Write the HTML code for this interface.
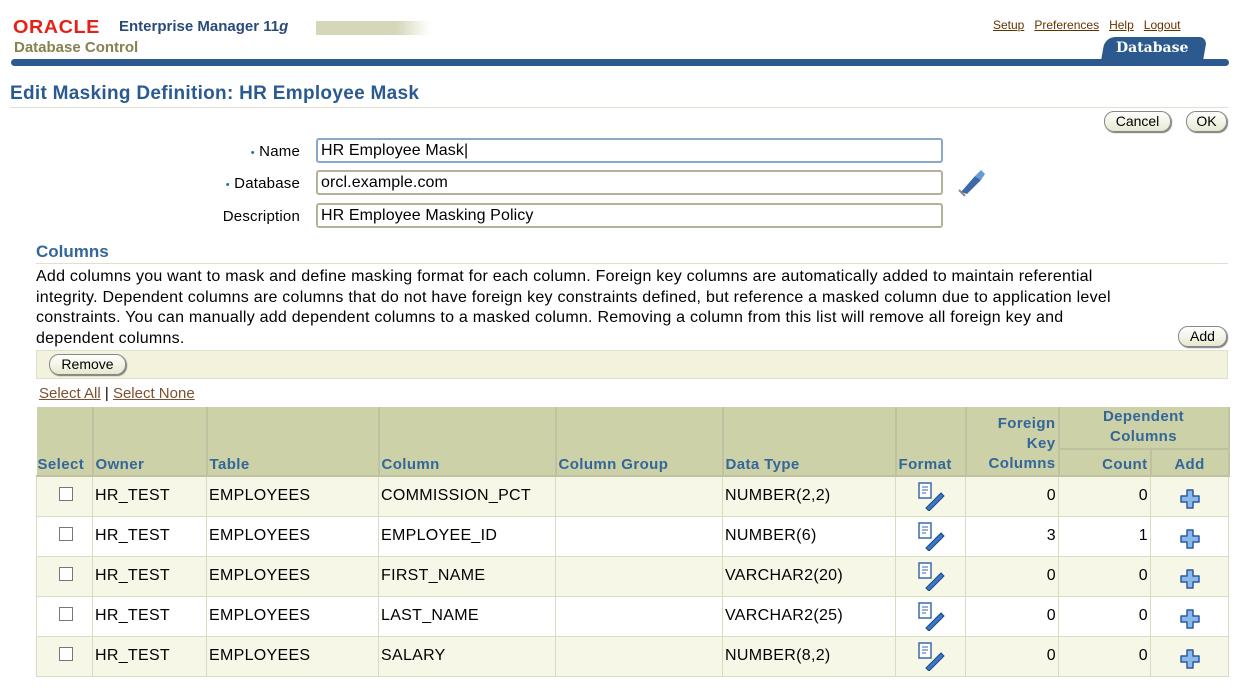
<!DOCTYPE html>
<html><head><style>
*{margin:0;padding:0;box-sizing:border-box}
body{width:1236px;height:692px;background:#fff;font-family:"Liberation Sans",sans-serif;position:relative;overflow:hidden;color:#000}
.a{position:absolute}
.lnk{color:#663300;text-decoration:underline;font-size:12px}
.btn{position:absolute;border:1px solid #888;border-radius:10px;background:linear-gradient(#fff,#e8e8d0);box-shadow:1px 1px 1px #777;font-size:14px;text-align:center;line-height:19px;height:21px}
.lbl{position:absolute;font-size:15px;text-align:right;width:200px;left:100px;letter-spacing:0.2px}
.inp{position:absolute;left:316px;width:627px;height:25px;border:2px solid #b5b29a;border-radius:3px;font-size:16px;padding:2px 3px;line-height:18px;letter-spacing:0.1px}
table{position:absolute;left:36px;top:407px;border-collapse:collapse;font-size:16px;letter-spacing:0.3px;table-layout:fixed}
td,th{border:1px solid #d8dcc0;overflow:hidden;white-space:nowrap}
th{background:#cdd1a8;color:#336699;font-weight:bold;text-align:left;vertical-align:bottom;padding:0 2px 1px 2px;border:2px solid #bfc2a0;border-width:0 2px 2px 0;line-height:18px;font-size:15px;letter-spacing:0.4px}
th.r{text-align:right}
td{height:40px;padding:0 2px;vertical-align:middle}
tr.o td{background:#f7f7e7}
tr.e td{background:#fff}
.cb{display:inline-block;width:14px;height:14px;border:1px solid #777;background:#fff;margin-left:20px}
</style></head><body>
<div class="a" style="left:13px;top:17px;font-size:18px;color:#e52218;font-weight:bold;letter-spacing:0.5px;transform:scaleX(1.1);transform-origin:left">ORACLE</div>
<div class="a" style="left:119px;top:18px;font-size:15px;color:#2a4a7c;font-weight:bold">Enterprise Manager 11<i>g</i></div>
<div class="a" style="left:316px;top:21px;width:114px;height:14px;background:linear-gradient(90deg,#d6d6b8 70%,#fff)"></div>
<div class="a" style="left:14px;top:39px;font-size:15px;color:#858250;font-weight:bold">Database Control</div>
<div class="a" style="left:993px;top:18px;font-size:12px"><span class="lnk">Setup</span>&nbsp;&nbsp;&nbsp;<span class="lnk">Preferences</span>&nbsp;&nbsp;&nbsp;<span class="lnk">Help</span>&nbsp;&nbsp;&nbsp;<span class="lnk">Logout</span></div>
<div class="a" style="left:1103px;top:37px;width:102px;height:25px;background:#2c5a8e;border-radius:10px 8px 0 0;transform:skewX(-10deg)"></div>
<div class="a" style="left:1116px;top:40px;color:#fff;font-weight:bold;font-size:14px;font-family:'DejaVu Serif',serif">Database</div>
<div class="a" style="left:11px;top:59px;width:1218px;height:7px;background:#2c5a8e;border-radius:4px"></div>
<div class="a" style="left:10px;top:83px;font-size:19px;font-weight:bold;color:#2a5a90;letter-spacing:0.3px">Edit Masking Definition: HR Employee Mask</div>
<div class="a" style="left:10px;top:107px;width:1218px;height:1px;background:#e0e0cc"></div>
<div class="btn" style="left:1104px;top:111px;width:67px">Cancel</div>
<div class="btn" style="left:1186px;top:111px;width:41px">OK</div>
<div class="lbl" style="top:143px"><span style="color:#336699;font-size:11px">•</span> Name</div>
<div class="lbl" style="top:175px"><span style="color:#336699;font-size:11px">•</span> Database</div>
<div class="lbl" style="top:208px">Description</div>
<div class="inp" style="top:138px;border-color:#8aa8c8">HR Employee Mask|</div>
<div class="inp" style="top:170px">orcl.example.com</div>
<div class="inp" style="top:203px">HR Employee Masking Policy</div>
<svg class="a" style="left:955px;top:166px" width="32" height="32" viewBox="0 0 32 32"><path d="M6 26 L20 10 L26 14 L12 28 Z" fill="#3a6aa8"/><path d="M20 10 L26 4 L30 8 L26 14Z" fill="#6a9ad0"/><path d="M4 24 L10 30" stroke="#888" stroke-width="2"/></svg>
<div class="a" style="left:36px;top:242px;font-size:17px;font-weight:bold;color:#336699">Columns</div>
<div class="a" style="left:36px;top:263px;width:1192px;height:1px;background:#e0e0cc"></div>
<div class="a" style="left:36px;top:267px;font-size:16px;letter-spacing:0.25px;line-height:20.5px;white-space:nowrap">Add columns you want to mask and define masking format for each column. Foreign key columns are automatically added to maintain referential<br>integrity. Dependent columns are columns that do not have foreign key constraints defined, but reference a masked column due to application level<br>constraints. You can manually add dependent columns to a masked column. Removing a column from this list will remove all foreign key and<br>dependent columns.</div>
<div class="btn" style="left:1178px;top:326px;width:49px">Add</div>
<div class="a" style="left:36px;top:350px;width:1192px;height:29px;background:#f2f2dd;border:1px solid #e0e0c8"></div>
<div class="btn" style="left:49px;top:354px;width:77px">Remove</div>
<div class="a" style="left:39px;top:385px;font-size:15px"><span class="lnk" style="font-size:15px;color:#7a5030">Select All</span> <b style="font-weight:normal">|</b> <span class="lnk" style="font-size:15px;color:#7a5030">Select None</span></div>
<table style="width:1192px">
<colgroup><col style="width:56px"><col style="width:114px"><col style="width:172px"><col style="width:177px"><col style="width:167px"><col style="width:173px"><col style="width:70px"><col style="width:93px"><col style="width:92px"><col style="width:78px"></colgroup>
<tr style="height:42px"><th rowspan="2" style="padding-left:1px">Select</th><th rowspan="2">Owner</th><th rowspan="2">Table</th><th rowspan="2">Column</th><th rowspan="2">Column Group</th><th rowspan="2">Data Type</th><th rowspan="2">Format</th><th rowspan="2" class="r" style="line-height:20px">Foreign<br>Key<br>Columns</th><th colspan="2" style="text-align:center;line-height:20px">Dependent<br>Columns</th></tr>
<tr style="height:27px"><th class="r">Count</th><th style="text-align:center">Add</th></tr>
<tr class="o"><td><span class="cb"></span></td><td>HR_TEST</td><td>EMPLOYEES</td><td>COMMISSION_PCT</td><td></td><td>NUMBER(2,2)</td><td class="f"></td><td align="right">0</td><td align="right">0</td><td class="p"></td></tr>
<tr class="e"><td><span class="cb"></span></td><td>HR_TEST</td><td>EMPLOYEES</td><td>EMPLOYEE_ID</td><td></td><td>NUMBER(6)</td><td class="f"></td><td align="right">3</td><td align="right">1</td><td class="p"></td></tr>
<tr class="o"><td><span class="cb"></span></td><td>HR_TEST</td><td>EMPLOYEES</td><td>FIRST_NAME</td><td></td><td>VARCHAR2(20)</td><td class="f"></td><td align="right">0</td><td align="right">0</td><td class="p"></td></tr>
<tr class="e"><td><span class="cb"></span></td><td>HR_TEST</td><td>EMPLOYEES</td><td>LAST_NAME</td><td></td><td>VARCHAR2(25)</td><td class="f"></td><td align="right">0</td><td align="right">0</td><td class="p"></td></tr>
<tr class="o"><td><span class="cb"></span></td><td>HR_TEST</td><td>EMPLOYEES</td><td>SALARY</td><td></td><td>NUMBER(8,2)</td><td class="f"></td><td align="right">0</td><td align="right">0</td><td class="p"></td></tr>
</table>
<script>
document.querySelectorAll('td.f').forEach(function(t){t.style.textAlign='center';t.innerHTML='<svg width="32" height="30" viewBox="0 0 32 30" style="vertical-align:middle"><rect x="4" y="2" width="12" height="15" fill="#fff" stroke="#3a6aa8" stroke-width="1.5"/><path d="M7 6h6M7 9h6M7 12h4" stroke="#3a6aa8"/><path d="M11 27 L26 12 L29 15 L14 30Z" fill="#3a76c8" stroke="#1a4a88"/></svg>'});
document.querySelectorAll('td.p').forEach(function(t){t.style.textAlign='center';t.innerHTML='<svg width="22" height="22" viewBox="0 0 22 22" style="vertical-align:middle;margin-top:6px"><path d="M8 2h6v6h6v6h-6v6h-6v-6h-6v-6h6z" fill="#8ab8e8" stroke="#2a5aa0" stroke-width="1.5" stroke-linejoin="round"/></svg>'});
</script>
</body></html>
